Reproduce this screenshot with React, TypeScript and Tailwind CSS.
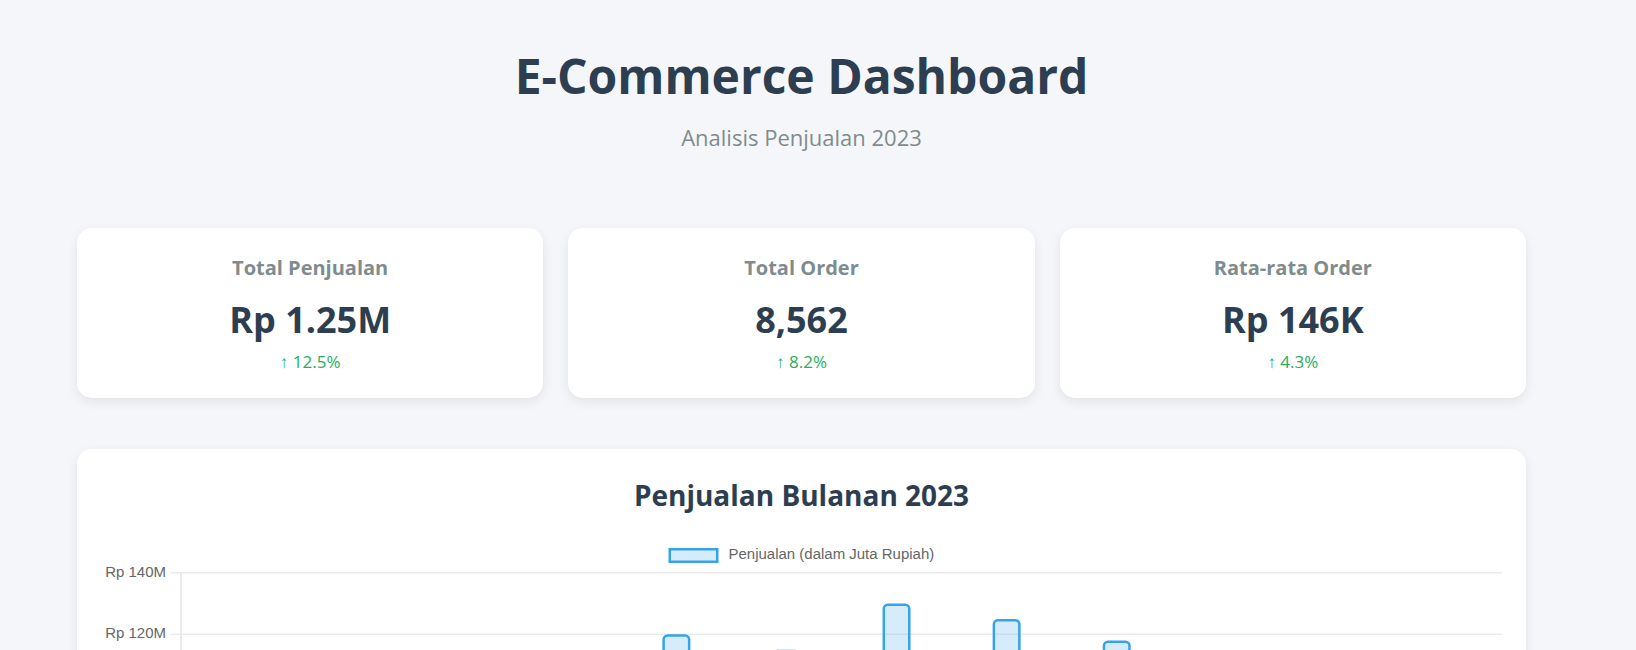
const ringkasan = [
  { judul: 'Total Penjualan', nilai: 'Rp 1.25M', naik: '12.5%' },
  { judul: 'Total Order', nilai: '8,562', naik: '8.2%' },
  { judul: 'Rata-rata Order', nilai: 'Rp 146K', naik: '4.3%' },
]

const bulan = ['Jan', 'Feb', 'Mar', 'Apr', 'Mei', 'Jun', 'Jul', 'Agu', 'Sep', 'Okt', 'Nov', 'Des']
const penjualan = [85, 78, 92, 105, 120, 115, 130, 125, 118, 98, 88, 96]

// ukuran grafik (px)
const LEBAR = 1401
const KIRI = 80
const ATAS = 34.7
const SKALA = 3.08
const MAKS = 140
const BAWAH = ATAS + MAKS * SKALA
const TINGGI = BAWAH + 40
const LEBAR_BAR = 28

function GrafikPenjualan() {
  const lebarKategori = (LEBAR - KIRI) / bulan.length
  const ticks = [140, 120, 100, 80, 60, 40, 20, 0]

  return (
    <svg width={LEBAR} height={TINGGI} viewBox={`0 0 ${LEBAR} ${TINGGI}`} className="block">
      {/* legenda */}
      <rect x={568.75} y={11.25} width={47.5} height={12.5} fill="rgba(54,162,235,0.2)" stroke="#36a2eb" strokeWidth={2.5} />
      <text
        x={627.5}
        y={17.5}
        dominantBaseline="middle"
        fontSize={15}
        fill="#666"
        fontFamily="'Liberation Sans', Arial, sans-serif"
      >
        Penjualan (dalam Juta Rupiah)
      </text>

      {ticks.map((t) => {
        const y = ATAS + (MAKS - t) * SKALA
        return (
          <g key={t}>
            <line x1={KIRI - 11} x2={LEBAR} y1={y} y2={y} stroke="#ebebeb" strokeWidth={1.5} />
            <text
              x={65}
              y={y}
              textAnchor="end"
              dominantBaseline="middle"
              fontSize={15}
              fill="#666"
              fontFamily="'Liberation Sans', Arial, sans-serif"
            >
              Rp {t}M
            </text>
          </g>
        )
      })}

      <line x1={KIRI} x2={KIRI} y1={ATAS} y2={BAWAH + 11} stroke="#e5e5e5" strokeWidth={1.5} />

      {penjualan.map((v, i) => {
        const tengah = KIRI + lebarKategori * (i + 0.5)
        const y = ATAS + (MAKS - v) * SKALA
        return (
          <g key={bulan[i]}>
            <rect
              x={tengah - LEBAR_BAR / 2 + 1.25}
              y={y + 1.25}
              width={LEBAR_BAR - 2.5}
              height={BAWAH - y - 1.25}
              rx={4}
              fill="rgba(54,162,235,0.2)"
              stroke="#36a2eb"
              strokeWidth={2.5}
            />
            <text
              x={tengah}
              y={BAWAH + 26}
              textAnchor="middle"
              fontSize={15}
              fill="#666"
              fontFamily="'Liberation Sans', Arial, sans-serif"
            >
              {bulan[i]}
            </text>
          </g>
        )
      })}
    </svg>
  )
}

export default function App() {
  return (
    <main className="min-h-screen bg-[#f5f6fa] pt-[47px] pb-10 pl-[77px] pr-[110px] font-['Open_Sans',sans-serif]">
      <header className="text-center">
        <h1 className="text-[48px] leading-[58px] font-bold text-[#2c3e50]">
          E-Commerce Dashboard
        </h1>
        <p className="mt-[18px] text-[22px] leading-[28px] text-[#7f8c8d]">
          Analisis Penjualan 2023
        </p>
      </header>

      <section className="grid grid-cols-3 gap-[25px] mt-[77px]">
        {ringkasan.map((item) => (
          <div
            key={item.judul}
            className="bg-white rounded-[15px] shadow-[0_4px_12px_rgba(0,0,0,0.08)] pt-[28px] pb-[25px] text-center"
          >
            <h3 className="text-[20px] leading-[24px] font-bold text-[#7f8c8d]">
              {item.judul}
            </h3>
            <p className="mt-[18px] text-[36px] leading-[44px] font-bold text-[#2c3e50]">
              {item.nilai}
            </p>
            <p className="mt-[9px] text-[17px] leading-[22px] text-[#27ae60]">
              ↑ {item.naik}
            </p>
          </div>
        ))}
      </section>

      <section className="mt-[51px] bg-white rounded-[15px] shadow-[0_4px_12px_rgba(0,0,0,0.08)] px-[24px] pt-[28px] pb-[24px]">
        <h2 className="text-center text-[28px] leading-[36px] font-bold text-[#2c3e50]">
          Penjualan Bulanan 2023
        </h2>
        <div className="mt-[25px]">
          <GrafikPenjualan />
        </div>
      </section>
    </main>
  )
}
